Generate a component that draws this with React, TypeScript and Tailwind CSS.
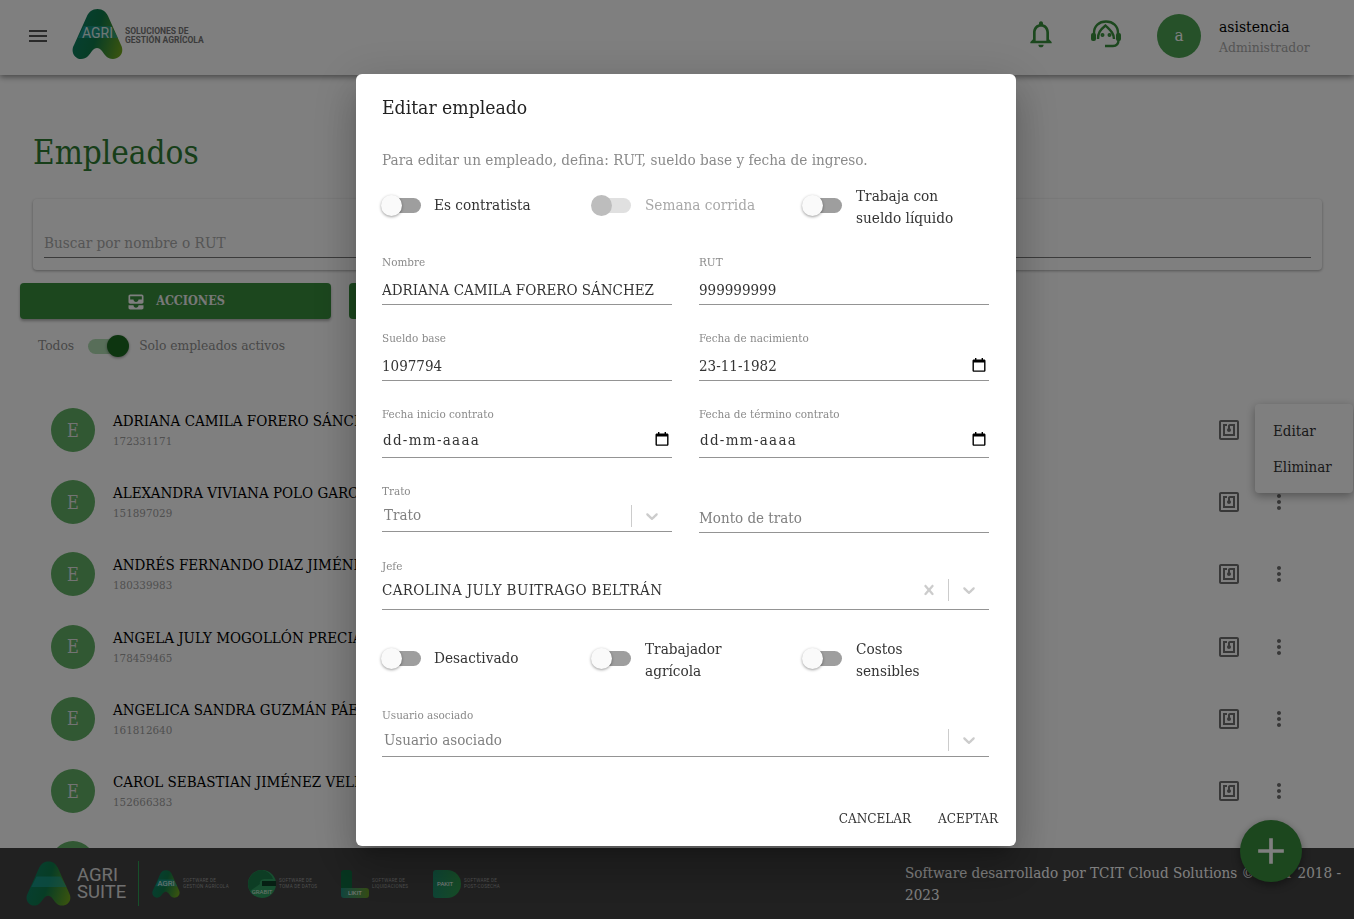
import { MdMenu, MdNotificationsNone, MdAllInbox, MdNfc, MdMoreVert, MdAdd } from "react-icons/md";

const EMPLOYEES = [
  ["ADRIANA CAMILA FORERO SÁNCHEZ", "172331171"],
  ["ALEXANDRA VIVIANA POLO GARCÍA", "151897029"],
  ["ANDRÉS FERNANDO DIAZ JIMÉNEZ", "180339983"],
  ["ANGELA JULY MOGOLLÓN PRECIADO", "178459465"],
  ["ANGELICA SANDRA GUZMÁN PÁEZ", "161812640"],
  ["CAROL SEBASTIAN JIMÉNEZ VELEZ", "152666383"],
];

const A_PATH =
  "M25.5 0C31 0 34 3 36 7L49 36C53 44 47 50 41 50C35 50 33 46 30 42C27 38 23 38 20 42C17 46 15 50 9 50C3 50-2 43 2 36L15 7C17 3 20 0 25.5 0Z";

function ALogo({ id, label, className }: { id: string; label?: boolean; className: string }) {
  return (
    <svg viewBox="0 0 51 50" className={className}>
      <defs>
        <linearGradient id={id} x1="0" y1="0.5" x2="1" y2="0.8">
          <stop offset="0" stopColor="#0d7f63" />
          <stop offset="0.45" stopColor="#0f7a4a" />
          <stop offset="1" stopColor="#73a81e" />
        </linearGradient>
      </defs>
      <path d={A_PATH} fill={`url(#${id})`} />
      <path d="M12 17H39L46 29H6Z" fill="#1da6a6" opacity="0.55" />
      {label && (
        <text x="25.5" y="29" textAnchor="middle" fontFamily="Roboto" fontSize="14" fill="#ffffff" opacity="0.85">
          AGRI
        </text>
      )}
    </svg>
  );
}

function CalendarIcon() {
  return (
    <svg viewBox="0 0 14 14" className="-mt-[3px] h-[14px] w-[14px] shrink-0 text-black">
      <path
        fill="currentColor"
        d="M3 0h1.4v1.4h5.2V0H11v1.4h1.2c.7 0 1.3.6 1.3 1.3v9.8c0 .7-.6 1.3-1.3 1.3H1.8c-.7 0-1.3-.6-1.3-1.3V2.7c0-.7.6-1.3 1.3-1.3H3zM1.9 4.6v7.9h10.2V4.6z"
      />
    </svg>
  );
}

function Chevron() {
  return (
    <svg viewBox="0 0 20 20" className="h-5 w-5 fill-[#cccccc]">
      <path d="M4.516 7.548c0.436-0.446 1.043-0.481 1.576 0l3.908 3.747 3.908-3.747c0.533-0.481 1.141-0.446 1.574 0 0.436 0.445 0.408 1.197 0 1.615-0.406 0.418-4.695 4.502-4.695 4.502-0.217 0.223-0.502 0.335-0.787 0.335s-0.57-0.112-0.789-0.335c0 0-4.287-4.084-4.695-4.502s-0.436-1.17 0-1.615z" />
    </svg>
  );
}

function Cross() {
  return (
    <svg viewBox="0 0 20 20" className="h-5 w-5 fill-[#cccccc]">
      <path d="M14.348 14.849c-0.469 0.469-1.229 0.469-1.697 0l-2.651-3.030-2.651 3.029c-0.469 0.469-1.229 0.469-1.697 0-0.469-0.469-0.469-1.229 0-1.697l2.758-3.15-2.759-3.152c-0.469-0.469-0.469-1.228 0-1.697s1.228-0.469 1.697 0l2.652 3.031 2.651-3.031c0.469-0.469 1.228-0.469 1.697 0s0.469 1.229 0 1.697l-2.758 3.152 2.758 3.15c0.469 0.469 0.469 1.229 0 1.698z" />
    </svg>
  );
}

function Toggle({ disabled }: { disabled?: boolean }) {
  return (
    <div className="mb-[4px] flex h-[22px] w-[41px] shrink-0 items-center">
      <div className={`relative ml-[2px] h-[15px] w-[37px] rounded-full ${disabled ? "bg-[#e0e0e0]" : "bg-[#9e9e9e]"}`}>
        <div
          className={`absolute -left-[3px] -top-[3px] h-[21px] w-[21px] rounded-full ${
            disabled ? "bg-[#bdbdbd]" : "bg-[#fafafa] shadow-[0_1px_3px_rgba(0,0,0,0.4)]"
          }`}
        />
      </div>
    </div>
  );
}

function ToggleItem({ lines, disabled, tight }: { lines: string[]; disabled?: boolean; tight?: boolean }) {
  return (
    <div className={`flex items-center ${tight ? "gap-[11px]" : "gap-[12px]"}`}>
      <Toggle disabled={disabled} />
      <div
        className={`text-[15.2px] leading-[22.5px] ${lines.length === 1 ? "mb-[4px]" : ""} ${
          disabled ? "text-[#a8a8a8]" : "text-[#333333]"
        }`}
      >
        {lines.map((l) => (
          <div key={l}>{l}</div>
        ))}
      </div>
    </div>
  );
}

function Field({ label, value, date }: { label: string; value: string; date?: boolean }) {
  const empty = value === "dd-mm-aaaa";
  return (
    <div className="border-b border-[#949494]">
      <div className="h-[14px] text-[11.6px] leading-[14px] text-[#8a8a8a]">{label}</div>
      <div className={`mt-[7px] flex items-center pr-[3px] text-[15px] text-[#333333] ${empty ? "h-[29px] pb-[4px]" : "h-[28px]"}`}>
        <input
          readOnly
          value={value}
          className={`w-full min-w-0 bg-transparent outline-none ${empty ? "pl-px tracking-[1.3px]" : ""}`}
        />
        {date && <CalendarIcon />}
      </div>
    </div>
  );
}

function Dropdown({
  label,
  value,
  placeholder,
  clear,
  bodyClass,
}: {
  label: string;
  value: string;
  placeholder?: boolean;
  clear?: boolean;
  bodyClass: string;
}) {
  return (
    <div className="border-b border-[#949494]">
      <div className="h-[14px] text-[11.6px] leading-[14px] text-[#8a8a8a]">{label}</div>
      <div className={`mt-[2px] flex items-center ${bodyClass}`}>
        <div
          className={`flex-1 text-[15px] ${placeholder ? "pl-[2px] text-[#808080]" : "text-[#333333]"} ${
            clear ? "tracking-[0.37px]" : ""
          }`}
        >
          {value}
        </div>
        {clear && <Cross />}
        <div className="ml-[9px] mr-[10px] h-[22px] w-px bg-[#cccccc]" />
        <div className="mr-[10px]">
          <Chevron />
        </div>
      </div>
    </div>
  );
}

function EditDialog() {
  return (
    <div className="fixed inset-0 z-30 flex items-start justify-center bg-black/50 pl-[18px] pt-[74px]">
      <div className="h-[772px] w-[660px] rounded-[6px] bg-white px-[26px] shadow-[0_11px_15px_-7px_rgba(0,0,0,0.2),0_24px_38px_3px_rgba(0,0,0,0.14),0_9px_46px_8px_rgba(0,0,0,0.12)]">
        <h2 className="pt-[21px] text-[19.2px] font-medium leading-[26px] text-[#222222]">Editar empleado</h2>
        <p className="mt-[26px] text-[15.2px] leading-[26px] text-[#8a8a8a]">
          Para editar un empleado, defina: RUT, sueldo base y fecha de ingreso.
        </p>
        <div className="mt-[11px] grid h-[46px] w-[630px] grid-cols-[210px_211px_209px] items-center">
          <ToggleItem lines={["Es contratista"]} tight />
          <ToggleItem lines={["Semana corrida"]} disabled />
          <ToggleItem lines={["Trabaja con", "sueldo líquido"]} />
        </div>
        <div className="mt-[25px] grid w-[607px] grid-cols-2 gap-x-[27px] gap-y-[26px]">
          <Field label="Nombre" value="ADRIANA CAMILA FORERO SÁNCHEZ" />
          <Field label="RUT" value="999999999" />
          <Field label="Sueldo base" value="1097794" />
          <Field label="Fecha de nacimiento" value="23-11-1982" date />
          <Field label="Fecha inicio contrato" value="dd-mm-aaaa" date />
          <Field label="Fecha de término contrato" value="dd-mm-aaaa" date />
          <Dropdown label="Trato" value="Trato" placeholder bodyClass="h-[31px]" />
          <div className="-mb-px flex items-end border-b border-[#949494] pb-[3px] text-[15px] text-[#808080]">
            Monto de trato
          </div>
        </div>
        <div className="mt-[27px] w-[607px]">
          <Dropdown label="Jefe" value="CAROLINA JULY BUITRAGO BELTRÁN" clear bodyClass="h-[34px] pb-[4px]" />
        </div>
        <div className="mt-[27px] grid h-[46px] w-[630px] grid-cols-[210px_211px_209px] items-center">
          <ToggleItem lines={["Desactivado"]} tight />
          <ToggleItem lines={["Trabajador", "agrícola"]} />
          <ToggleItem lines={["Costos", "sensibles"]} />
        </div>
        <div className="mt-[25px] w-[607px]">
          <Dropdown label="Usuario asociado" value="Usuario asociado" placeholder bodyClass="h-[32px]" />
        </div>
        <div className="-mr-[8px] mt-[49px] flex justify-end gap-[27px] text-[13.4px] leading-[26px] text-[#333333]">
          <button>CANCELAR</button>
          <button>ACEPTAR</button>
        </div>
      </div>
    </div>
  );
}

function FooterBrand({ badge, lines, boxClass }: { badge: React.ReactNode; lines: string[]; boxClass: string }) {
  return (
    <div className={`flex items-center ${boxClass}`}>
      {badge}
      <div className="ml-[3px] whitespace-nowrap font-['Roboto'] text-[4.6px] leading-[6px] tracking-[0.25px] text-[#9e9e9e]">
        {lines.map((l) => (
          <div key={l}>{l}</div>
        ))}
      </div>
    </div>
  );
}

export default function App() {
  return (
    <div className="relative flex h-screen w-full flex-col overflow-hidden bg-white font-['DejaVu_Serif_Condensed','DejaVu_Serif',serif]">
      <header className="relative z-10 flex h-[75px] shrink-0 items-center bg-white pb-[3px] pl-[26px] pr-[43px] shadow-[0_2px_6px_rgba(0,0,0,0.45)]">
        <MdMenu className="h-[24px] w-[24px] text-[#555555]" />
        <ALogo id="hdr" label className="-mt-[5px] ml-[22px] h-[50px] w-[51px]" />
        <div className="-mt-[1px] ml-[2px] font-['Roboto'] text-[8.5px] font-bold leading-[8.5px] text-[#777777]">
          <div>SOLUCIONES DE</div>
          <div>GESTIÓN AGRÍCOLA</div>
        </div>
        <div className="ml-auto flex items-center">
          <MdNotificationsNone className="-mt-[4px] h-[32px] w-[32px] text-[#38903c]" />
          <svg viewBox="0 0 32 28" fill="none" stroke="#38903c" strokeWidth="2.4" className="-mt-[4px] ml-[33px] h-[28px] w-[32px]">
            <path d="M4 15V13C4 6 9 1.500 16 1.500S28 6 28 13V15" />
            <path d="M8 19C8 13 10 10 15.500 5.500C20 10 24 13 24 19" />
            <rect x="1" y="13" width="5" height="8" rx="2" fill="#38903c" stroke="none" />
            <rect x="26" y="13" width="5" height="8" rx="2" fill="#38903c" stroke="none" />
            <path d="M28.500 20C28.500 24 26.500 26 23 26H15" />
            <circle cx="12.500" cy="15" r="0.800" fill="#38903c" />
            <circle cx="19.500" cy="15" r="0.800" fill="#38903c" />
          </svg>
          <div className="ml-[35px] flex h-[44px] w-[44px] items-center justify-center rounded-full bg-[#4da352] text-[17px] text-white">
            a
          </div>
          <div className="ml-[18px] mt-[1px] w-[92px]">
            <div className="text-[15.5px] leading-[20px] text-black">asistencia</div>
            <div className="text-[13.8px] leading-[20px] text-[#aaaaaa]">Administrador</div>
          </div>
        </div>
      </header>

      <main className="min-h-0 flex-1 overflow-hidden">
        <h1 className="ml-[33px] mt-[56px] text-[33px] leading-[44px] text-[#2e7d32]">Empleados</h1>
        <div className="ml-[33px] mt-[24px] h-[71px] w-[1289px] rounded-[4px] bg-white px-[11px] pt-[33px] shadow-[0_1px_3px_rgba(0,0,0,0.35)]">
          <div className="h-[26px] border-b border-[#777777] text-[15.2px] leading-[22px] text-[#aaaaaa]">
            Buscar por nombre o RUT
          </div>
        </div>
        <div className="ml-[20px] mt-[13px] flex gap-[18px]">
          <button className="flex h-[36px] w-[311px] items-center justify-center gap-[10px] rounded-[4px] bg-[#388e3c] pt-px text-[12.5px] font-bold text-[#f0f0f0] shadow-[0_2px_3px_rgba(0,0,0,0.3)]">
            <MdAllInbox className="h-[20px] w-[20px] text-white" />
            ACCIONES
          </button>
          <button className="h-[36px] w-[311px] rounded-[4px] bg-[#388e3c]" />
        </div>
        <div className="ml-[38px] mt-[13px] flex h-[26px] items-center text-[13.7px] text-[#909090]">
          <span>Todos</span>
          <div className="relative ml-[14px] mr-[13px] mt-[2px] h-[15px] w-[38px] rounded-full bg-[#b0dcb3]">
            <div className="absolute -right-[3px] -top-[3.5px] h-[22px] w-[22px] rounded-full bg-[#1b6b20] shadow-[0_1px_3px_rgba(0,0,0,0.4)]" />
          </div>
          <span>Solo empleados activos</span>
        </div>
        <ul className="mt-[36px] pl-[51px] pr-[63px]">
          {EMPLOYEES.map(([name, rut]) => (
            <li key={rut} className="flex h-[72.2px] items-center">
              <div className="flex h-[44px] w-[44px] shrink-0 items-center justify-center rounded-full bg-[#62b066] text-[18px] text-[#e6e6e6]">
                E
              </div>
              <div className="ml-[18px] flex-1 pt-[3px]">
                <div className="text-[15px] leading-[20px] text-black">{name}</div>
                <div className="text-[11.5px] leading-[21px] text-[#a0a0a0]">{rut}</div>
              </div>
              <MdNfc className="h-[24px] w-[24px] text-[#707070]" />
              <MdMoreVert className="ml-[26px] h-[24px] w-[24px] text-[#707070]" />
            </li>
          ))}
          <li className="flex h-[72.2px] items-center">
            <div className="h-[44px] w-[44px] shrink-0 rounded-full bg-[#62b066]" />
          </li>
        </ul>
      </main>

      <footer className="relative flex h-[71px] shrink-0 items-center bg-[#424242] pl-[26px] pr-[9px]">
        <ALogo id="ftr" className="h-[45px] w-[45px]" />
        <div className="ml-[6px] w-[48px] font-['Roboto'] text-[18.5px] leading-[17px] text-[#e0e0e0]">
          <div>AGRI</div>
          <div>SUITE</div>
        </div>
        <div className="ml-[13px] h-[45px] w-px bg-[#2e9e55]" />
        <FooterBrand
          boxClass="ml-[13px] w-[76px]"
          badge={<ALogo id="f1" label className="h-[28px] w-[28px] shrink-0" />}
          lines={["SOFTWARE DE", "GESTIÓN AGRÍCOLA"]}
        />
        <FooterBrand
          boxClass="ml-[20px] w-[69px]"
          badge={
            <svg viewBox="0 0 28 28" className="h-[28px] w-[28px] shrink-0">
              <circle cx="14" cy="14" r="14" fill="#2e9c60" />
              <path d="M14 0A14 14 0 0 0 2 21L12 14C11 11 14 9 17 9H25A14 14 0 0 0 14 0Z" fill="#1a7a48" />
              <rect x="14" y="11" width="14" height="5" fill="#0c3f26" />
              <text x="14" y="24" textAnchor="middle" fontFamily="Roboto" fontSize="6" fill="#ffffff" opacity="0.8">
                GRABIT
              </text>
            </svg>
          }
          lines={["SOFTWARE DE", "TOMA DE DATOS"]}
        />
        <FooterBrand
          boxClass="ml-[24px] w-[67px]"
          badge={
            <div className="flex h-[28px] w-[28px] shrink-0 flex-col">
              <div className="h-[18px] w-[11px] rounded-t-[3px] bg-[#0d6b3f]" />
              <div className="flex h-[10px] w-[28px] items-center rounded-b-[3px] rounded-tr-[3px] bg-gradient-to-r from-[#1d8a7a] to-[#6a9a22] pl-[7px] font-['Roboto'] text-[6px] text-white">
                LIKIT
              </div>
            </div>
          }
          lines={["SOFTWARE DE", "LIQUIDACIONES"]}
        />
        <FooterBrand
          boxClass="ml-[25px]"
          badge={
            <div className="flex h-[28px] w-[28px] shrink-0 items-center rounded-l-[3px] rounded-r-[14px] bg-gradient-to-r from-[#1d8a6a] to-[#2f9a4a] pl-[4px] font-['Roboto'] text-[6px] text-white">
              PAKIT
            </div>
          }
          lines={["SOFTWARE DE", "POST-COSECHA"]}
        />
        <p className="ml-auto w-[440px] text-[15.1px] leading-[22px] text-white">
          Software desarrollado por TCIT Cloud Solutions © TCIT 2018 - 2023
        </p>
      </footer>

      <div className="absolute right-[1px] top-[404px] z-20 h-[89px] w-[98px] rounded-[4px] bg-white py-[9px] pl-[18px] text-[15px] leading-[36px] text-[#333333] shadow-[0_3px_10px_rgba(0,0,0,0.35)]">
        <div>Editar</div>
        <div>Eliminar</div>
      </div>

      <button className="absolute left-[1240px] top-[820px] z-20 flex h-[62px] w-[62px] items-center justify-center rounded-full bg-[#388e3c] shadow-[0_3px_8px_rgba(0,0,0,0.4)]">
        <MdAdd className="h-[44px] w-[44px] text-white" />
      </button>

      <EditDialog />
    </div>
  );
}
